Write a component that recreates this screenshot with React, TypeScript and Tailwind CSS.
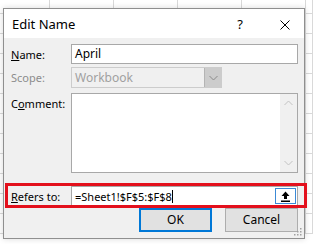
const cols = 6;
const rows = 12;

function SheetGrid() {
  const cells = [];
  for (let i = 0; i < cols * rows; i++) {
    cells.push(<div key={i} className="border-r border-b border-[#d9d9d9]" />);
  }
  return (
    <div className="grid grid-cols-[50px_64px_64px_64px_64px_7px] grid-rows-[14px_repeat(11,20px)] w-[313px] h-[244px] overflow-hidden bg-white">
      {cells}
    </div>
  );
}

function Chevron({ up = false, color = "#606060" }: { up?: boolean; color?: string }) {
  return (
    <svg width="9" height="6" viewBox="0 0 9 6">
      <path
        d={up ? "M0.5 5 L4.5 1 L8.5 5" : "M0.5 1 L4.5 5 L8.5 1"}
        fill="none"
        stroke={color}
        strokeWidth="1"
      />
    </svg>
  );
}

export default function App() {
  return (
    <div className="relative w-[313px] h-[244px] overflow-hidden font-['Noto_Sans',Arial,sans-serif] text-[#000]">
      <SheetGrid />

      {/* dialog window */}
      <div className="absolute left-[3px] top-[8px] w-[302px] h-[231px] border border-[#8f8f8f] bg-[#f0f0f0] flex flex-col shadow-[0_0_6px_rgba(0,0,0,0.15)]">
        <div className="h-[29px] bg-white flex items-center pl-[8px] pr-[14px] shrink-0">
          <span className="text-[13px] leading-none text-black mt-[2px]">Edit Name</span>
          <span className="ml-auto mr-[37px] text-[13px] leading-none text-black mt-[2px]">?</span>
          <svg width="10" height="10" viewBox="0 0 10 10" className="mt-[2px]">
            <path d="M0.5 0.5 L9.5 9.5 M9.5 0.5 L0.5 9.5" stroke="#000" strokeWidth="1" />
          </svg>
        </div>

        <div className="flex flex-col pl-[7px] pr-[6px] text-[11px] leading-none">
          <div className="flex items-center mt-[6px] h-[20px]">
            <span className="w-[60px]"><u>N</u>ame:</span>
            <div className="flex-1 h-full border border-[#a8a8a8] bg-white flex items-center px-[3px] text-[12px]">
              April
            </div>
          </div>

          <div className="flex items-center mt-[3px] h-[21px]">
            <span className="w-[60px] text-[#8c8c8c]">Scope:</span>
            <div className="w-[151px] h-full border border-[#cccccc] bg-[#f0f0f0] flex items-center">
              <span className="flex-1 pl-[3px] text-[12px] text-[#a0a0a0]">Workbook</span>
              <div className="w-[17px] h-full bg-[#cccccc] border-l border-[#b4b4b4] flex items-center justify-center">
                <Chevron color="#8a8a8a" />
              </div>
            </div>
          </div>

          <div className="flex mt-[5px] h-[80px]">
            <span className="w-[60px] pt-[5px]">C<u>o</u>mment:</span>
            <div className="flex-1 h-full border border-[#a8a8a8] bg-white flex justify-end">
              <div className="w-[17px] h-full bg-[#f0f0f0] flex flex-col items-center justify-between py-[6px]">
                <Chevron up color="#c2c2c2" />
                <Chevron color="#c2c2c2" />
              </div>
            </div>
          </div>

          <div className="flex items-center mt-[13px] h-[20px]">
            <span className="w-[60px]"><u>R</u>efers to:</span>
            <div className="flex-1 h-full border border-[#a8a8a8] bg-white flex items-center pl-[3px] pr-[1px]">
              <span>=Sheet1!$F$5:$F$8</span>
              <span className="w-px h-[13px] bg-black" />
              <div className="ml-auto w-[21px] h-[16px] border border-[#3c8ad6] bg-white flex items-center justify-center">
                <svg width="9" height="11" viewBox="0 0 9 11">
                  <path d="M4.5 0.5 L0.5 5 L3 5 L3 8 L6 8 L6 5 L8.5 5 Z" fill="#000" />
                  <rect x="0" y="9.5" width="9" height="1.5" fill="#000" />
                </svg>
              </div>
            </div>
          </div>

          <div className="flex mt-[2px] h-[24px] text-[12px]">
            <div className="ml-[128px] w-[73px] h-full border-2 border-[#0078d7] bg-[#e1e1e1] flex items-center justify-center">
              OK
            </div>
            <div className="ml-[13px] w-[73px] h-full border border-[#adadad] bg-[#e1e1e1] flex items-center justify-center">
              Cancel
            </div>
          </div>
        </div>

        <svg className="absolute right-[2px] bottom-[2px]" width="10" height="10" viewBox="0 0 10 10">
          <rect x="8" y="2" width="1.5" height="1.5" fill="#a0a0a0" />
          <rect x="5" y="5" width="1.5" height="1.5" fill="#a0a0a0" />
          <rect x="8" y="5" width="1.5" height="1.5" fill="#a0a0a0" />
          <rect x="2" y="8" width="1.5" height="1.5" fill="#a0a0a0" />
          <rect x="5" y="8" width="1.5" height="1.5" fill="#a0a0a0" />
          <rect x="8" y="8" width="1.5" height="1.5" fill="#a0a0a0" />
        </svg>
      </div>

      {/* red highlight annotation */}
      <div className="absolute left-[5px] top-[183px] w-[302px] h-[25px] border-[3px] border-[#e3101c]" />
    </div>
  );
}
